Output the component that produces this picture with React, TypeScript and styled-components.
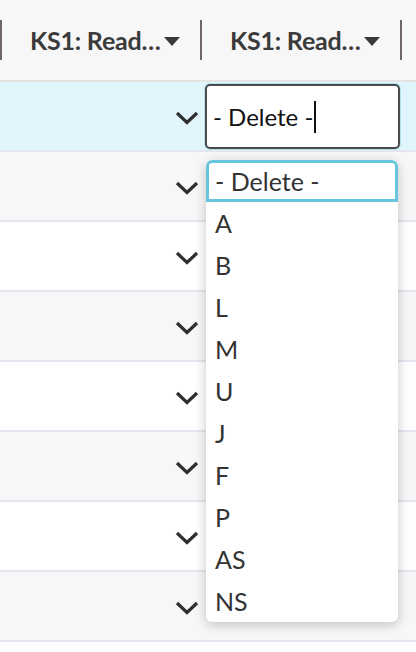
import * as React from 'react';
import styled, { createGlobalStyle } from 'styled-components';

const GlobalStyle = createGlobalStyle`
	html, body {
		margin: 0;
		padding: 0;
		background: #ffffff;
	}
	body {
		font-family: Lato, "Open Sans", sans-serif;
	}
`;

const options = ['A', 'B', 'L', 'M', 'U', 'J', 'F', 'P', 'AS', 'NS'];
const rowCount = 8;

const Chevron = () => (
	<svg width="24" height="14" viewBox="0 0 24 14">
		<path d="M2 2 L12 11.5 L22 2" fill="none" stroke="#2f2f2f" strokeWidth="3.2" />
	</svg>
);

export default function App() {
	const rows = Array.from({ length: rowCount }, (_, i) => i);
	return (
		<Page>
			<GlobalStyle />
			<Header>
				<Divider />
				<HeadCell>
					<HeadText>KS1: Read…</HeadText>
					<Caret />
				</HeadCell>
				<Divider />
				<HeadCell>
					<HeadText>KS1: Read…</HeadText>
					<Caret />
				</HeadCell>
				<Divider />
			</Header>
			{rows.map(i => (
				<Row key={i} selected={i === 0} striped={i % 2 === 1}>
					<SelectCell>
						<Chevron />
					</SelectCell>
					<EditCell>
						{i === 0 && (
							<EditBox>
								- Delete -<Cursor />
							</EditBox>
						)}
					</EditCell>
				</Row>
			))}
			<Menu>
				<ActiveOption>- Delete -</ActiveOption>
				{options.map(o => (
					<Option key={o}>{o}</Option>
				))}
			</Menu>
		</Page>
	);
}

const Page = styled.div`
	position: relative;
	width: 416px;
	height: 652px;
	overflow: hidden;
	background: #ffffff;
`;

const Header = styled.div`
	display: flex;
	align-items: center;
	height: 80px;
	background: #f7f7f7;
	border-bottom: 2px solid #e3e3e3;
`;

const Divider = styled.span`
	flex: none;
	width: 2px;
	height: 40px;
	background: #6d6663;
`;

const HeadCell = styled.div`
	flex: none;
	width: 198px;
	display: flex;
	align-items: center;
	padding-left: 28px;
	box-sizing: border-box;
	color: #3a3a3a;
`;

const HeadText = styled.span`
	font-weight: 700;
	font-size: 25px;
	letter-spacing: -0.2px;
	white-space: nowrap;
`;

const Caret = styled.span`
	margin-left: 3px;
	margin-top: 2px;
	width: 0;
	height: 0;
	border-left: 8px solid transparent;
	border-right: 8px solid transparent;
	border-top: 9px solid #3a3a3a;
`;

const Row = styled.div<{ selected?: boolean; striped?: boolean }>`
	display: flex;
	height: 68px;
	border-bottom: 2px solid #e4e6ef;
	background: ${p => (p.selected ? '#e0f6fc' : p.striped ? '#f7f7f7' : '#ffffff')};
`;

const SelectCell = styled.div`
	flex: none;
	width: 202px;
	display: flex;
	align-items: center;
	justify-content: flex-end;
	padding-right: 3px;
	padding-top: 4px;
	box-sizing: border-box;
`;

const EditCell = styled.div`
	flex: none;
	width: 198px;
	padding: 2px 0 1px 3px;
	box-sizing: border-box;
	display: flex;
`;

const EditBox = styled.div`
	flex: 1;
	display: flex;
	align-items: center;
	padding-left: 6px;
	border: 2px solid #4a4a4a;
	border-radius: 5px;
	background: #ffffff;
	box-shadow: 0 0 0 1px #b4e2ec;
	font-size: 24px;
	color: #111111;
`;

const Cursor = styled.span`
	display: inline-block;
	width: 2px;
	height: 32px;
	margin-left: 1px;
	background: #111111;
`;

const Menu = styled.div`
	position: absolute;
	left: 206px;
	top: 160px;
	width: 192px;
	background: #ffffff;
	border-radius: 6px;
	box-shadow: 0 3px 12px rgba(0, 0, 0, 0.22);
	overflow: hidden;
`;

const Option = styled.div`
	height: 42px;
	display: flex;
	align-items: center;
	padding-left: 9px;
	font-size: 25px;
	font-weight: 400;
	color: #333333;
`;

const ActiveOption = styled(Option)`
	height: 42px;
	box-sizing: border-box;
	padding-left: 6px;
	border: 3px solid #66c5dd;
	border-radius: 6px 6px 0 0;
`;
